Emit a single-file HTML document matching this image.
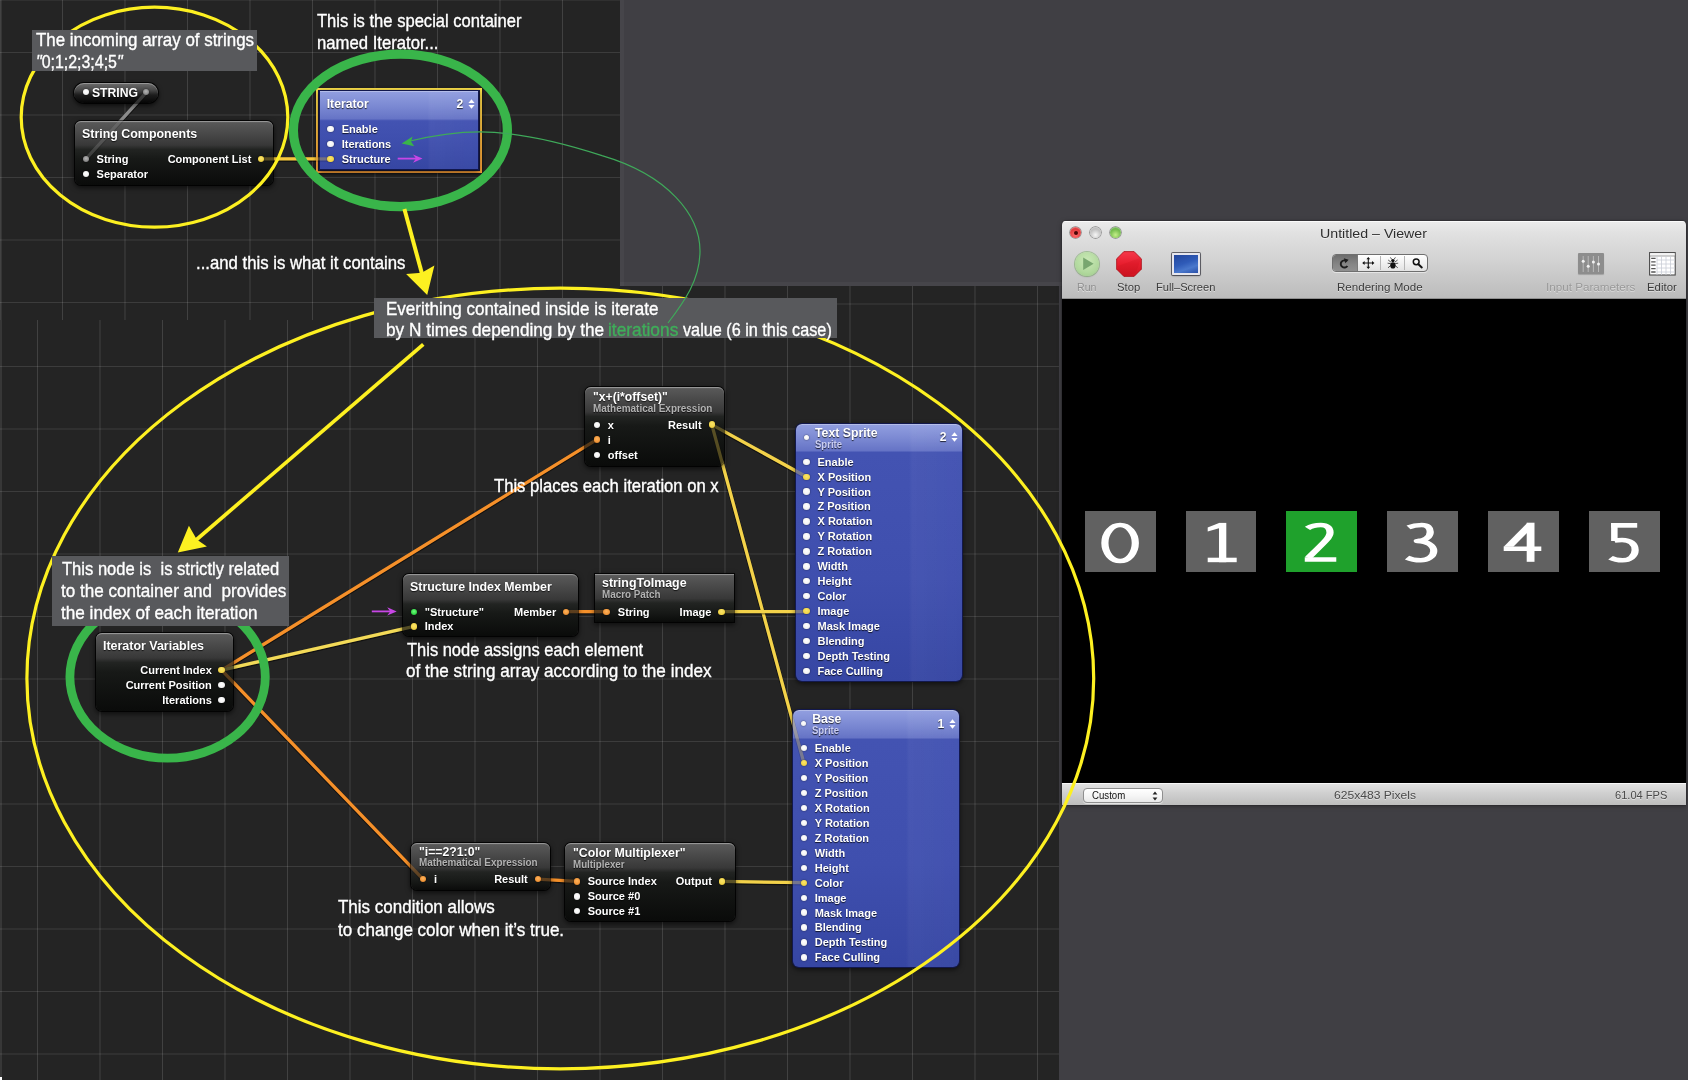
<!DOCTYPE html>
<html><head><meta charset="utf-8"><title>Iterator</title>
<style>
html,body{margin:0;padding:0;font-family:"Liberation Sans", sans-serif}
body{width:1688px;height:1080px;position:relative;overflow:hidden;background:#403f44;font-family:"Liberation Sans", sans-serif}
.grid{position:absolute;background-color:#242424;background-image:linear-gradient(to right,rgba(255,255,255,.135) 0,rgba(255,255,255,.135) 1px,transparent 1px),linear-gradient(to bottom,rgba(255,255,255,.11) 0,rgba(255,255,255,.11) 1px,transparent 1px);background-size:62.5px 62.5px}
</style></head><body>
<div style="position:absolute;left:0;top:0;width:1688px;height:1080px;will-change:transform">
<div class="grid" style="left:0;top:286px;width:1058.5px;height:794px;background-position:37px 17.5px;box-shadow:inset 2px 0 0 rgba(255,255,255,.09)"></div>
<div class="grid" style="left:0;top:0;width:620px;height:320px;background-position:-0.5px 52px;box-shadow:inset 2px 0 0 rgba(255,255,255,.08), inset 0 1px 0 rgba(255,255,255,.06)"></div>
<div style="position:absolute;left:0;top:1077px;width:2px;height:3px;background:#fff"></div>
<div style="position:absolute;left:620px;top:0;width:3.5px;height:286px;background:rgba(255,255,255,.035)"></div><div style="position:absolute;left:620px;top:282px;width:442px;height:4px;background:rgba(255,255,255,.035)"></div>
<svg style="position:absolute;left:0;top:0;opacity:1.0" width="1688" height="1080" viewBox="0 0 1688 1080"><line x1="146.4" y1="92.9" x2="85.9" y2="159.5" stroke="rgba(0,0,0,.45)" stroke-width="4.5" stroke-linecap="round"/><line x1="146.4" y1="92.3" x2="85.9" y2="158.9" stroke="#8c8c8c" stroke-width="3.3" stroke-linecap="round"/><line x1="260.7" y1="159.5" x2="330.6" y2="159.5" stroke="rgba(0,0,0,.45)" stroke-width="4.5" stroke-linecap="round"/><line x1="260.7" y1="158.9" x2="330.6" y2="158.9" stroke="#f6c83e" stroke-width="3.3" stroke-linecap="round"/><line x1="221.6" y1="670.7" x2="596.7" y2="440.2" stroke="rgba(0,0,0,.45)" stroke-width="4.5" stroke-linecap="round"/><line x1="221.6" y1="670.1" x2="596.7" y2="439.6" stroke="#f5902a" stroke-width="3.3" stroke-linecap="round"/><line x1="221.6" y1="670.7" x2="414.0" y2="627.0" stroke="rgba(0,0,0,.45)" stroke-width="4.5" stroke-linecap="round"/><line x1="221.6" y1="670.1" x2="414.0" y2="626.4" stroke="#f3da58" stroke-width="3.3" stroke-linecap="round"/><line x1="221.6" y1="670.7" x2="423.0" y2="879.7" stroke="rgba(0,0,0,.45)" stroke-width="4.5" stroke-linecap="round"/><line x1="221.6" y1="670.1" x2="423.0" y2="879.1" stroke="#f5902a" stroke-width="3.3" stroke-linecap="round"/><line x1="711.8" y1="425.2" x2="806.4" y2="477.3" stroke="rgba(0,0,0,.45)" stroke-width="4.5" stroke-linecap="round"/><line x1="711.8" y1="424.6" x2="806.4" y2="476.7" stroke="#f3d24a" stroke-width="3.3" stroke-linecap="round"/><line x1="711.8" y1="425.2" x2="803.9" y2="763.5" stroke="rgba(0,0,0,.45)" stroke-width="4.5" stroke-linecap="round"/><line x1="711.8" y1="424.6" x2="803.9" y2="762.9" stroke="#f3d24a" stroke-width="3.3" stroke-linecap="round"/><line x1="566.2" y1="612.3" x2="606.4" y2="612.3" stroke="rgba(0,0,0,.45)" stroke-width="4.5" stroke-linecap="round"/><line x1="566.2" y1="611.7" x2="606.4" y2="611.7" stroke="#f5902a" stroke-width="3.3" stroke-linecap="round"/><line x1="721.4" y1="612.3" x2="806.4" y2="612.3" stroke="rgba(0,0,0,.45)" stroke-width="4.5" stroke-linecap="round"/><line x1="721.4" y1="611.7" x2="806.4" y2="611.7" stroke="#f3d24a" stroke-width="3.3" stroke-linecap="round"/><line x1="537.7" y1="879.7" x2="576.8" y2="882.0" stroke="rgba(0,0,0,.45)" stroke-width="4.5" stroke-linecap="round"/><line x1="537.7" y1="879.1" x2="576.8" y2="881.4" stroke="#f5902a" stroke-width="3.3" stroke-linecap="round"/><line x1="722.2" y1="882.0" x2="803.9" y2="883.3" stroke="rgba(0,0,0,.45)" stroke-width="4.5" stroke-linecap="round"/><line x1="722.2" y1="881.4" x2="803.9" y2="882.7" stroke="#f3d24a" stroke-width="3.3" stroke-linecap="round"/></svg>
<div style="position:absolute;left:74px;top:83px;width:84px;height:19.5px;border-radius:10px;background:linear-gradient(to bottom,#6e6e6e 0,#484848 35%,#1c1c1c 60%,#050505 100%);box-shadow:0 0 0 1px rgba(0,0,0,.85),0 2px 4px 1px rgba(0,0,0,.6),inset 0 1px 0 rgba(255,255,255,.3)"></div>
<div style="position:absolute;left:74.7px;top:121.0px;width:197.9px;height:63.5px;border-radius:6px;background:linear-gradient(to bottom, #737373 0px, #585858 2px, #383838 24.0px, #222422 28.5px, #171917 38.0px, #0a0b0a 100%);box-shadow:0 0 0 1px rgba(0,0,0,.85),0 2px 5px 1px rgba(0,0,0,.6),inset 0 1px 0 rgba(255,255,255,.28)"></div>
<div style="position:absolute;left:316.3px;top:87.8px;width:165.5px;height:85px;background:linear-gradient(to bottom,#f7dc4a 0,#f5b93f 50%,#f39a35 100%);box-shadow:0 1px 3px rgba(0,0,0,.6)"></div>
<div style="position:absolute;left:318.3px;top:89.8px;width:161.5px;height:81px;background:#1a1a3a"></div>
<div style="position:absolute;left:319.6px;top:91.4px;width:158.8px;height:78.0px;border-radius:0px;background:linear-gradient(to right, rgba(255,255,255,0) 0, rgba(255,255,255,0) 68%, rgba(255,255,255,.035) 70%, rgba(255,255,255,.015) 100%),linear-gradient(to bottom, #929fe0 0px, #7a88d2 15.8px, #6674c6 27.8px, #4353b2 29.8px, #3f4fae 60%, #3646a3 100%);box-shadow:0 0 0 1px rgba(18,24,80,.95),0 2px 5px 1px rgba(0,0,0,.55),inset 0 1px 0 rgba(255,255,255,.30)"></div>
<svg style="position:absolute;left:467.7px;top:99.0px" width="7" height="10" viewBox="0 0 7 10"><path d="M3.5 0.3 L6.6 4 L0.4 4 Z M3.5 9.7 L6.6 6 L0.4 6 Z" fill="#fff"/></svg>
<div style="position:absolute;left:585.2px;top:387.4px;width:138.6px;height:78.2px;border-radius:6px;background:linear-gradient(to bottom, #737373 0px, #585858 2px, #383838 25.0px, #222422 29.5px, #171917 39.0px, #0a0b0a 100%);box-shadow:0 0 0 1px rgba(0,0,0,.85),0 2px 5px 1px rgba(0,0,0,.6),inset 0 1px 0 rgba(255,255,255,.28)"></div>
<div style="position:absolute;left:796.0px;top:424.0px;width:166.0px;height:257.3px;border-radius:6px;background:linear-gradient(to right, rgba(255,255,255,0) 0, rgba(255,255,255,0) 68%, rgba(255,255,255,.035) 70%, rgba(255,255,255,.015) 100%),linear-gradient(to bottom, #929fe0 0px, #7a88d2 15.1px, #6674c6 26.5px, #4353b2 28.5px, #3f4fae 60%, #3646a3 100%);box-shadow:0 0 0 1px rgba(18,24,80,.95),0 2px 5px 1px rgba(0,0,0,.55),inset 0 1px 0 rgba(255,255,255,.30)"></div>
<svg style="position:absolute;left:951.2px;top:432.4px" width="7" height="10" viewBox="0 0 7 10"><path d="M3.5 0.3 L6.6 4 L0.4 4 Z M3.5 9.7 L6.6 6 L0.4 6 Z" fill="#fff"/></svg>
<div style="position:absolute;left:793.3px;top:710.2px;width:166.0px;height:257.3px;border-radius:6px;background:linear-gradient(to right, rgba(255,255,255,0) 0, rgba(255,255,255,0) 68%, rgba(255,255,255,.035) 70%, rgba(255,255,255,.015) 100%),linear-gradient(to bottom, #929fe0 0px, #7a88d2 15.7px, #6674c6 27.5px, #4353b2 29.5px, #3f4fae 60%, #3646a3 100%);box-shadow:0 0 0 1px rgba(18,24,80,.95),0 2px 5px 1px rgba(0,0,0,.55),inset 0 1px 0 rgba(255,255,255,.30)"></div>
<svg style="position:absolute;left:948.5px;top:718.6px" width="7" height="10" viewBox="0 0 7 10"><path d="M3.5 0.3 L6.6 4 L0.4 4 Z M3.5 9.7 L6.6 6 L0.4 6 Z" fill="#fff"/></svg>
<div style="position:absolute;left:402.6px;top:574.2px;width:175.0px;height:61.6px;border-radius:6px;background:linear-gradient(to bottom, #737373 0px, #585858 2px, #383838 25.5px, #222422 30.0px, #171917 39.5px, #0a0b0a 100%);box-shadow:0 0 0 1px rgba(0,0,0,.85),0 2px 5px 1px rgba(0,0,0,.6),inset 0 1px 0 rgba(255,255,255,.28)"></div>
<div style="position:absolute;left:594.7px;top:573.8px;width:139.7px;height:48.3px;border-radius:0px;background:linear-gradient(to bottom, #6a6a6a 0px, #585858 2px, #383838 24.5px, #222422 29.0px, #171917 38.5px, #0a0b0a 100%);box-shadow:0 0 0 1px rgba(0,0,0,.85),0 2px 5px 1px rgba(0,0,0,.6),inset 0 1px 0 rgba(255,255,255,.28)"></div>
<div style="position:absolute;left:95.8px;top:632.7px;width:137.6px;height:78.7px;border-radius:6px;background:linear-gradient(to bottom, #737373 0px, #585858 2px, #383838 25.0px, #222422 29.5px, #171917 39.0px, #0a0b0a 100%);box-shadow:0 0 0 1px rgba(0,0,0,.85),0 2px 5px 1px rgba(0,0,0,.6),inset 0 1px 0 rgba(255,255,255,.28)"></div>
<div style="position:absolute;left:411.3px;top:842.6px;width:138.6px;height:47.9px;border-radius:6px;background:linear-gradient(to bottom, #737373 0px, #585858 2px, #383838 24.5px, #222422 29.0px, #171917 38.5px, #0a0b0a 100%);box-shadow:0 0 0 1px rgba(0,0,0,.85),0 2px 5px 1px rgba(0,0,0,.6),inset 0 1px 0 rgba(255,255,255,.28)"></div>
<div style="position:absolute;left:565.0px;top:843.0px;width:169.5px;height:78.2px;border-radius:6px;background:linear-gradient(to bottom, #737373 0px, #585858 2px, #383838 25.0px, #222422 29.5px, #171917 39.0px, #0a0b0a 100%);box-shadow:0 0 0 1px rgba(0,0,0,.85),0 2px 5px 1px rgba(0,0,0,.6),inset 0 1px 0 rgba(255,255,255,.28)"></div>
<svg style="position:absolute;left:0;top:0;opacity:0.3" width="1688" height="1080" viewBox="0 0 1688 1080"><line x1="146.4" y1="92.9" x2="85.9" y2="159.5" stroke="rgba(0,0,0,.45)" stroke-width="4.5" stroke-linecap="round"/><line x1="146.4" y1="92.3" x2="85.9" y2="158.9" stroke="#8c8c8c" stroke-width="3.3" stroke-linecap="round"/><line x1="260.7" y1="159.5" x2="330.6" y2="159.5" stroke="rgba(0,0,0,.45)" stroke-width="4.5" stroke-linecap="round"/><line x1="260.7" y1="158.9" x2="330.6" y2="158.9" stroke="#f6c83e" stroke-width="3.3" stroke-linecap="round"/><line x1="221.6" y1="670.7" x2="596.7" y2="440.2" stroke="rgba(0,0,0,.45)" stroke-width="4.5" stroke-linecap="round"/><line x1="221.6" y1="670.1" x2="596.7" y2="439.6" stroke="#f5902a" stroke-width="3.3" stroke-linecap="round"/><line x1="221.6" y1="670.7" x2="414.0" y2="627.0" stroke="rgba(0,0,0,.45)" stroke-width="4.5" stroke-linecap="round"/><line x1="221.6" y1="670.1" x2="414.0" y2="626.4" stroke="#f3da58" stroke-width="3.3" stroke-linecap="round"/><line x1="221.6" y1="670.7" x2="423.0" y2="879.7" stroke="rgba(0,0,0,.45)" stroke-width="4.5" stroke-linecap="round"/><line x1="221.6" y1="670.1" x2="423.0" y2="879.1" stroke="#f5902a" stroke-width="3.3" stroke-linecap="round"/><line x1="711.8" y1="425.2" x2="806.4" y2="477.3" stroke="rgba(0,0,0,.45)" stroke-width="4.5" stroke-linecap="round"/><line x1="711.8" y1="424.6" x2="806.4" y2="476.7" stroke="#f3d24a" stroke-width="3.3" stroke-linecap="round"/><line x1="711.8" y1="425.2" x2="803.9" y2="763.5" stroke="rgba(0,0,0,.45)" stroke-width="4.5" stroke-linecap="round"/><line x1="711.8" y1="424.6" x2="803.9" y2="762.9" stroke="#f3d24a" stroke-width="3.3" stroke-linecap="round"/><line x1="566.2" y1="612.3" x2="606.4" y2="612.3" stroke="rgba(0,0,0,.45)" stroke-width="4.5" stroke-linecap="round"/><line x1="566.2" y1="611.7" x2="606.4" y2="611.7" stroke="#f5902a" stroke-width="3.3" stroke-linecap="round"/><line x1="721.4" y1="612.3" x2="806.4" y2="612.3" stroke="rgba(0,0,0,.45)" stroke-width="4.5" stroke-linecap="round"/><line x1="721.4" y1="611.7" x2="806.4" y2="611.7" stroke="#f3d24a" stroke-width="3.3" stroke-linecap="round"/><line x1="537.7" y1="879.7" x2="576.8" y2="882.0" stroke="rgba(0,0,0,.45)" stroke-width="4.5" stroke-linecap="round"/><line x1="537.7" y1="879.1" x2="576.8" y2="881.4" stroke="#f5902a" stroke-width="3.3" stroke-linecap="round"/><line x1="722.2" y1="882.0" x2="803.9" y2="883.3" stroke="rgba(0,0,0,.45)" stroke-width="4.5" stroke-linecap="round"/><line x1="722.2" y1="881.4" x2="803.9" y2="882.7" stroke="#f3d24a" stroke-width="3.3" stroke-linecap="round"/></svg>
<div style="position:absolute;left:82.60px;top:89.10px;width:6.20px;height:6.20px;border-radius:50%;background:radial-gradient(circle at 50% 40%, #ffffff 0, #f4f4f4 55%, #c9c9c9 100%);box-shadow:0 0 1.5px rgba(0,0,0,.7)"></div>
<div style="position:absolute;left:143.30px;top:89.20px;width:6.20px;height:6.20px;border-radius:50%;background:radial-gradient(circle at 50% 40%, #b5b5b5 0, #8b8b8b 60%, #5c5c5c 100%);box-shadow:0 0 1.5px rgba(0,0,0,.7)"></div>
<div style="position:absolute;left:82.75px;top:155.75px;width:6.30px;height:6.30px;border-radius:50%;background:radial-gradient(circle at 50% 40%, #b5b5b5 0, #8b8b8b 60%, #5c5c5c 100%);box-shadow:0 0 1.5px rgba(0,0,0,.7)"></div>
<div style="position:absolute;left:82.75px;top:170.85px;width:6.30px;height:6.30px;border-radius:50%;background:radial-gradient(circle at 50% 40%, #ffffff 0, #f4f4f4 55%, #c9c9c9 100%);box-shadow:0 0 1.5px rgba(0,0,0,.7)"></div>
<div style="position:absolute;left:257.55px;top:155.75px;width:6.30px;height:6.30px;border-radius:50%;background:radial-gradient(circle at 50% 40%, #fbe56a 0, #f2d548 60%, #c9a92e 100%);box-shadow:0 0 1.5px rgba(0,0,0,.7)"></div>
<div style="position:absolute;left:327.45px;top:125.75px;width:6.30px;height:6.30px;border-radius:50%;background:radial-gradient(circle at 50% 40%, #ffffff 0, #f4f4f4 55%, #c9c9c9 100%);box-shadow:0 0 1.5px rgba(0,0,0,.7)"></div>
<div style="position:absolute;left:327.45px;top:140.75px;width:6.30px;height:6.30px;border-radius:50%;background:radial-gradient(circle at 50% 40%, #ffffff 0, #f4f4f4 55%, #c9c9c9 100%);box-shadow:0 0 1.5px rgba(0,0,0,.7)"></div>
<div style="position:absolute;left:327.45px;top:155.75px;width:6.30px;height:6.30px;border-radius:50%;background:radial-gradient(circle at 50% 40%, #fbe56a 0, #f2d548 60%, #c9a92e 100%);box-shadow:0 0 1.5px rgba(0,0,0,.7)"></div>
<div style="position:absolute;left:593.55px;top:422.05px;width:6.30px;height:6.30px;border-radius:50%;background:radial-gradient(circle at 50% 40%, #ffffff 0, #f4f4f4 55%, #c9c9c9 100%);box-shadow:0 0 1.5px rgba(0,0,0,.7)"></div>
<div style="position:absolute;left:593.55px;top:436.45px;width:6.30px;height:6.30px;border-radius:50%;background:radial-gradient(circle at 50% 40%, #ffb35a 0, #f0963a 60%, #c06f1e 100%);box-shadow:0 0 1.5px rgba(0,0,0,.7)"></div>
<div style="position:absolute;left:593.55px;top:452.05px;width:6.30px;height:6.30px;border-radius:50%;background:radial-gradient(circle at 50% 40%, #ffffff 0, #f4f4f4 55%, #c9c9c9 100%);box-shadow:0 0 1.5px rgba(0,0,0,.7)"></div>
<div style="position:absolute;left:708.65px;top:421.45px;width:6.30px;height:6.30px;border-radius:50%;background:radial-gradient(circle at 50% 40%, #fbe56a 0, #f2d548 60%, #c9a92e 100%);box-shadow:0 0 1.5px rgba(0,0,0,.7)"></div>
<div style="position:absolute;left:803.80px;top:434.60px;width:5.20px;height:5.20px;border-radius:50%;background:radial-gradient(circle at 50% 40%, #ffffff 0, #f4f4f4 55%, #c9c9c9 100%);box-shadow:0 0 1.5px rgba(0,0,0,.7)"></div>
<div style="position:absolute;left:803.25px;top:458.55px;width:6.30px;height:6.30px;border-radius:50%;background:radial-gradient(circle at 50% 40%, #ffffff 0, #f4f4f4 55%, #c9c9c9 100%);box-shadow:0 0 1.5px rgba(0,0,0,.7)"></div>
<div style="position:absolute;left:803.25px;top:473.50px;width:6.30px;height:6.30px;border-radius:50%;background:radial-gradient(circle at 50% 40%, #fbe56a 0, #f2d548 60%, #c9a92e 100%);box-shadow:0 0 1.5px rgba(0,0,0,.7)"></div>
<div style="position:absolute;left:803.25px;top:488.46px;width:6.30px;height:6.30px;border-radius:50%;background:radial-gradient(circle at 50% 40%, #ffffff 0, #f4f4f4 55%, #c9c9c9 100%);box-shadow:0 0 1.5px rgba(0,0,0,.7)"></div>
<div style="position:absolute;left:803.25px;top:503.42px;width:6.30px;height:6.30px;border-radius:50%;background:radial-gradient(circle at 50% 40%, #ffffff 0, #f4f4f4 55%, #c9c9c9 100%);box-shadow:0 0 1.5px rgba(0,0,0,.7)"></div>
<div style="position:absolute;left:803.25px;top:518.37px;width:6.30px;height:6.30px;border-radius:50%;background:radial-gradient(circle at 50% 40%, #ffffff 0, #f4f4f4 55%, #c9c9c9 100%);box-shadow:0 0 1.5px rgba(0,0,0,.7)"></div>
<div style="position:absolute;left:803.25px;top:533.33px;width:6.30px;height:6.30px;border-radius:50%;background:radial-gradient(circle at 50% 40%, #ffffff 0, #f4f4f4 55%, #c9c9c9 100%);box-shadow:0 0 1.5px rgba(0,0,0,.7)"></div>
<div style="position:absolute;left:803.25px;top:548.28px;width:6.30px;height:6.30px;border-radius:50%;background:radial-gradient(circle at 50% 40%, #ffffff 0, #f4f4f4 55%, #c9c9c9 100%);box-shadow:0 0 1.5px rgba(0,0,0,.7)"></div>
<div style="position:absolute;left:803.25px;top:563.24px;width:6.30px;height:6.30px;border-radius:50%;background:radial-gradient(circle at 50% 40%, #ffffff 0, #f4f4f4 55%, #c9c9c9 100%);box-shadow:0 0 1.5px rgba(0,0,0,.7)"></div>
<div style="position:absolute;left:803.25px;top:578.19px;width:6.30px;height:6.30px;border-radius:50%;background:radial-gradient(circle at 50% 40%, #ffffff 0, #f4f4f4 55%, #c9c9c9 100%);box-shadow:0 0 1.5px rgba(0,0,0,.7)"></div>
<div style="position:absolute;left:803.25px;top:593.14px;width:6.30px;height:6.30px;border-radius:50%;background:radial-gradient(circle at 50% 40%, #ffffff 0, #f4f4f4 55%, #c9c9c9 100%);box-shadow:0 0 1.5px rgba(0,0,0,.7)"></div>
<div style="position:absolute;left:803.25px;top:608.10px;width:6.30px;height:6.30px;border-radius:50%;background:radial-gradient(circle at 50% 40%, #fbe56a 0, #f2d548 60%, #c9a92e 100%);box-shadow:0 0 1.5px rgba(0,0,0,.7)"></div>
<div style="position:absolute;left:803.25px;top:623.05px;width:6.30px;height:6.30px;border-radius:50%;background:radial-gradient(circle at 50% 40%, #ffffff 0, #f4f4f4 55%, #c9c9c9 100%);box-shadow:0 0 1.5px rgba(0,0,0,.7)"></div>
<div style="position:absolute;left:803.25px;top:638.01px;width:6.30px;height:6.30px;border-radius:50%;background:radial-gradient(circle at 50% 40%, #ffffff 0, #f4f4f4 55%, #c9c9c9 100%);box-shadow:0 0 1.5px rgba(0,0,0,.7)"></div>
<div style="position:absolute;left:803.25px;top:652.97px;width:6.30px;height:6.30px;border-radius:50%;background:radial-gradient(circle at 50% 40%, #ffffff 0, #f4f4f4 55%, #c9c9c9 100%);box-shadow:0 0 1.5px rgba(0,0,0,.7)"></div>
<div style="position:absolute;left:803.25px;top:667.92px;width:6.30px;height:6.30px;border-radius:50%;background:radial-gradient(circle at 50% 40%, #ffffff 0, #f4f4f4 55%, #c9c9c9 100%);box-shadow:0 0 1.5px rgba(0,0,0,.7)"></div>
<div style="position:absolute;left:801.30px;top:720.80px;width:5.20px;height:5.20px;border-radius:50%;background:radial-gradient(circle at 50% 40%, #ffffff 0, #f4f4f4 55%, #c9c9c9 100%);box-shadow:0 0 1.5px rgba(0,0,0,.7)"></div>
<div style="position:absolute;left:800.75px;top:744.85px;width:6.30px;height:6.30px;border-radius:50%;background:radial-gradient(circle at 50% 40%, #ffffff 0, #f4f4f4 55%, #c9c9c9 100%);box-shadow:0 0 1.5px rgba(0,0,0,.7)"></div>
<div style="position:absolute;left:800.75px;top:759.82px;width:6.30px;height:6.30px;border-radius:50%;background:radial-gradient(circle at 50% 40%, #fbe56a 0, #f2d548 60%, #c9a92e 100%);box-shadow:0 0 1.5px rgba(0,0,0,.7)"></div>
<div style="position:absolute;left:800.75px;top:774.78px;width:6.30px;height:6.30px;border-radius:50%;background:radial-gradient(circle at 50% 40%, #ffffff 0, #f4f4f4 55%, #c9c9c9 100%);box-shadow:0 0 1.5px rgba(0,0,0,.7)"></div>
<div style="position:absolute;left:800.75px;top:789.75px;width:6.30px;height:6.30px;border-radius:50%;background:radial-gradient(circle at 50% 40%, #ffffff 0, #f4f4f4 55%, #c9c9c9 100%);box-shadow:0 0 1.5px rgba(0,0,0,.7)"></div>
<div style="position:absolute;left:800.75px;top:804.71px;width:6.30px;height:6.30px;border-radius:50%;background:radial-gradient(circle at 50% 40%, #ffffff 0, #f4f4f4 55%, #c9c9c9 100%);box-shadow:0 0 1.5px rgba(0,0,0,.7)"></div>
<div style="position:absolute;left:800.75px;top:819.68px;width:6.30px;height:6.30px;border-radius:50%;background:radial-gradient(circle at 50% 40%, #ffffff 0, #f4f4f4 55%, #c9c9c9 100%);box-shadow:0 0 1.5px rgba(0,0,0,.7)"></div>
<div style="position:absolute;left:800.75px;top:834.64px;width:6.30px;height:6.30px;border-radius:50%;background:radial-gradient(circle at 50% 40%, #ffffff 0, #f4f4f4 55%, #c9c9c9 100%);box-shadow:0 0 1.5px rgba(0,0,0,.7)"></div>
<div style="position:absolute;left:800.75px;top:849.61px;width:6.30px;height:6.30px;border-radius:50%;background:radial-gradient(circle at 50% 40%, #ffffff 0, #f4f4f4 55%, #c9c9c9 100%);box-shadow:0 0 1.5px rgba(0,0,0,.7)"></div>
<div style="position:absolute;left:800.75px;top:864.57px;width:6.30px;height:6.30px;border-radius:50%;background:radial-gradient(circle at 50% 40%, #ffffff 0, #f4f4f4 55%, #c9c9c9 100%);box-shadow:0 0 1.5px rgba(0,0,0,.7)"></div>
<div style="position:absolute;left:800.75px;top:879.53px;width:6.30px;height:6.30px;border-radius:50%;background:radial-gradient(circle at 50% 40%, #fbe56a 0, #f2d548 60%, #c9a92e 100%);box-shadow:0 0 1.5px rgba(0,0,0,.7)"></div>
<div style="position:absolute;left:800.75px;top:894.50px;width:6.30px;height:6.30px;border-radius:50%;background:radial-gradient(circle at 50% 40%, #ffffff 0, #f4f4f4 55%, #c9c9c9 100%);box-shadow:0 0 1.5px rgba(0,0,0,.7)"></div>
<div style="position:absolute;left:800.75px;top:909.47px;width:6.30px;height:6.30px;border-radius:50%;background:radial-gradient(circle at 50% 40%, #ffffff 0, #f4f4f4 55%, #c9c9c9 100%);box-shadow:0 0 1.5px rgba(0,0,0,.7)"></div>
<div style="position:absolute;left:800.75px;top:924.43px;width:6.30px;height:6.30px;border-radius:50%;background:radial-gradient(circle at 50% 40%, #ffffff 0, #f4f4f4 55%, #c9c9c9 100%);box-shadow:0 0 1.5px rgba(0,0,0,.7)"></div>
<div style="position:absolute;left:800.75px;top:939.39px;width:6.30px;height:6.30px;border-radius:50%;background:radial-gradient(circle at 50% 40%, #ffffff 0, #f4f4f4 55%, #c9c9c9 100%);box-shadow:0 0 1.5px rgba(0,0,0,.7)"></div>
<div style="position:absolute;left:800.75px;top:954.36px;width:6.30px;height:6.30px;border-radius:50%;background:radial-gradient(circle at 50% 40%, #ffffff 0, #f4f4f4 55%, #c9c9c9 100%);box-shadow:0 0 1.5px rgba(0,0,0,.7)"></div>
<div style="position:absolute;left:410.85px;top:608.55px;width:6.30px;height:6.30px;border-radius:50%;background:radial-gradient(circle at 50% 40%, #6dff7c 0, #35d848 60%, #1f9a2d 100%);box-shadow:0 0 1.5px rgba(0,0,0,.7)"></div>
<div style="position:absolute;left:410.85px;top:623.25px;width:6.30px;height:6.30px;border-radius:50%;background:radial-gradient(circle at 50% 40%, #fbe56a 0, #f2d548 60%, #c9a92e 100%);box-shadow:0 0 1.5px rgba(0,0,0,.7)"></div>
<div style="position:absolute;left:563.05px;top:608.55px;width:6.30px;height:6.30px;border-radius:50%;background:radial-gradient(circle at 50% 40%, #ffb35a 0, #f0963a 60%, #c06f1e 100%);box-shadow:0 0 1.5px rgba(0,0,0,.7)"></div>
<div style="position:absolute;left:603.25px;top:608.55px;width:6.30px;height:6.30px;border-radius:50%;background:radial-gradient(circle at 50% 40%, #ffb35a 0, #f0963a 60%, #c06f1e 100%);box-shadow:0 0 1.5px rgba(0,0,0,.7)"></div>
<div style="position:absolute;left:718.25px;top:608.55px;width:6.30px;height:6.30px;border-radius:50%;background:radial-gradient(circle at 50% 40%, #fbe56a 0, #f2d548 60%, #c9a92e 100%);box-shadow:0 0 1.5px rgba(0,0,0,.7)"></div>
<div style="position:absolute;left:218.45px;top:666.95px;width:6.30px;height:6.30px;border-radius:50%;background:radial-gradient(circle at 50% 40%, #fbe56a 0, #f2d548 60%, #c9a92e 100%);box-shadow:0 0 1.5px rgba(0,0,0,.7)"></div>
<div style="position:absolute;left:218.45px;top:682.05px;width:6.30px;height:6.30px;border-radius:50%;background:radial-gradient(circle at 50% 40%, #ffffff 0, #f4f4f4 55%, #c9c9c9 100%);box-shadow:0 0 1.5px rgba(0,0,0,.7)"></div>
<div style="position:absolute;left:218.45px;top:697.15px;width:6.30px;height:6.30px;border-radius:50%;background:radial-gradient(circle at 50% 40%, #ffffff 0, #f4f4f4 55%, #c9c9c9 100%);box-shadow:0 0 1.5px rgba(0,0,0,.7)"></div>
<div style="position:absolute;left:419.85px;top:875.95px;width:6.30px;height:6.30px;border-radius:50%;background:radial-gradient(circle at 50% 40%, #ffb35a 0, #f0963a 60%, #c06f1e 100%);box-shadow:0 0 1.5px rgba(0,0,0,.7)"></div>
<div style="position:absolute;left:534.55px;top:875.95px;width:6.30px;height:6.30px;border-radius:50%;background:radial-gradient(circle at 50% 40%, #ffb35a 0, #f0963a 60%, #c06f1e 100%);box-shadow:0 0 1.5px rgba(0,0,0,.7)"></div>
<div style="position:absolute;left:573.65px;top:878.25px;width:6.30px;height:6.30px;border-radius:50%;background:radial-gradient(circle at 50% 40%, #ffb35a 0, #f0963a 60%, #c06f1e 100%);box-shadow:0 0 1.5px rgba(0,0,0,.7)"></div>
<div style="position:absolute;left:573.65px;top:893.25px;width:6.30px;height:6.30px;border-radius:50%;background:radial-gradient(circle at 50% 40%, #ffffff 0, #f4f4f4 55%, #c9c9c9 100%);box-shadow:0 0 1.5px rgba(0,0,0,.7)"></div>
<div style="position:absolute;left:573.65px;top:908.15px;width:6.30px;height:6.30px;border-radius:50%;background:radial-gradient(circle at 50% 40%, #ffffff 0, #f4f4f4 55%, #c9c9c9 100%);box-shadow:0 0 1.5px rgba(0,0,0,.7)"></div>
<div style="position:absolute;left:719.05px;top:878.25px;width:6.30px;height:6.30px;border-radius:50%;background:radial-gradient(circle at 50% 40%, #fbe56a 0, #f2d548 60%, #c9a92e 100%);box-shadow:0 0 1.5px rgba(0,0,0,.7)"></div>
<span id="t17" style="position:absolute;left:91.80px;top:86.60px;font-size:12.00px;line-height:1;white-space:pre;font-weight:bold;color:#fff;transform-origin:0 0;transform:scaleX(1.0145);text-shadow:0 1px 1px rgba(0,0,0,.75);">STRING</span>
<span id="t18" style="position:absolute;left:81.50px;top:128.00px;font-size:12.20px;line-height:1;white-space:pre;font-weight:bold;color:#fff;transform-origin:0 0;transform:scaleX(1.0188);text-shadow:0 1px 1px rgba(0,0,0,.75);">String Components</span>
<span id="t19" style="position:absolute;left:96.60px;top:153.80px;font-size:11.00px;line-height:1;white-space:pre;font-weight:bold;color:#fff;transform-origin:0 0;text-shadow:0 1px 1px rgba(0,0,0,.75);">String</span>
<span id="t20" style="position:absolute;left:96.60px;top:168.80px;font-size:11.00px;line-height:1;white-space:pre;font-weight:bold;color:#fff;transform-origin:0 0;text-shadow:0 1px 1px rgba(0,0,0,.75);">Separator</span>
<span id="t21" style="position:absolute;left:167.68px;top:153.80px;font-size:11.00px;line-height:1;white-space:pre;font-weight:bold;color:#fff;transform-origin:0 0;text-shadow:0 1px 1px rgba(0,0,0,.75);">Component List</span>
<span id="t22" style="position:absolute;left:326.70px;top:97.90px;font-size:12.20px;line-height:1;white-space:pre;font-weight:bold;color:#fff;transform-origin:0 0;text-shadow:0 1px 1px rgba(0,0,0,.75);">Iterator</span>
<span id="t23" style="position:absolute;left:456.40px;top:98.20px;font-size:12.20px;line-height:1;white-space:pre;font-weight:bold;color:#fff;transform-origin:0 0;text-shadow:0 1px 1px rgba(0,0,0,.75);">2</span>
<span id="t24" style="position:absolute;left:341.70px;top:123.80px;font-size:11.00px;line-height:1;white-space:pre;font-weight:bold;color:#fff;transform-origin:0 0;text-shadow:0 1px 1px rgba(0,0,0,.75);">Enable</span>
<span id="t25" style="position:absolute;left:341.70px;top:138.80px;font-size:11.00px;line-height:1;white-space:pre;font-weight:bold;color:#fff;transform-origin:0 0;text-shadow:0 1px 1px rgba(0,0,0,.75);">Iterations</span>
<span id="t26" style="position:absolute;left:341.70px;top:153.80px;font-size:11.00px;line-height:1;white-space:pre;font-weight:bold;color:#fff;transform-origin:0 0;text-shadow:0 1px 1px rgba(0,0,0,.75);">Structure</span>
<span id="t27" style="position:absolute;left:593.20px;top:390.50px;font-size:12.20px;line-height:1;white-space:pre;font-weight:bold;color:#fff;transform-origin:0 0;transform:scaleX(0.9990);text-shadow:0 1px 1px rgba(0,0,0,.75);">"x+(i*offset)"</span>
<span id="t28" style="position:absolute;left:593.20px;top:403.50px;font-size:10.00px;line-height:1;white-space:pre;font-weight:bold;color:#b2b2b2;transform-origin:0 0;transform:scaleX(0.9938);text-shadow:0 1px 1px rgba(0,0,0,.75);">Mathematical Expression</span>
<span id="t29" style="position:absolute;left:607.80px;top:420.10px;font-size:11.00px;line-height:1;white-space:pre;font-weight:bold;color:#fff;transform-origin:0 0;text-shadow:0 1px 1px rgba(0,0,0,.75);">x</span>
<span id="t30" style="position:absolute;left:607.80px;top:434.50px;font-size:11.00px;line-height:1;white-space:pre;font-weight:bold;color:#fff;transform-origin:0 0;text-shadow:0 1px 1px rgba(0,0,0,.75);">i</span>
<span id="t31" style="position:absolute;left:607.80px;top:450.10px;font-size:11.00px;line-height:1;white-space:pre;font-weight:bold;color:#fff;transform-origin:0 0;text-shadow:0 1px 1px rgba(0,0,0,.75);">offset</span>
<span id="t32" style="position:absolute;left:667.98px;top:420.10px;font-size:11.00px;line-height:1;white-space:pre;font-weight:bold;color:#fff;transform-origin:0 0;text-shadow:0 1px 1px rgba(0,0,0,.75);">Result</span>
<span id="t33" style="position:absolute;left:815.40px;top:426.50px;font-size:12.20px;line-height:1;white-space:pre;font-weight:bold;color:#fff;transform-origin:0 0;transform:scaleX(1.0065);text-shadow:0 1px 1px rgba(0,0,0,.75);">Text Sprite</span>
<span id="t34" style="position:absolute;left:815.40px;top:439.60px;font-size:10.00px;line-height:1;white-space:pre;font-weight:bold;color:#c9cdf2;transform-origin:0 0;transform:scaleX(0.9526);text-shadow:0 1px 1px rgba(0,0,0,.75);">Sprite</span>
<span id="t35" style="position:absolute;left:939.70px;top:431.30px;font-size:12.20px;line-height:1;white-space:pre;font-weight:bold;color:#fff;transform-origin:0 0;text-shadow:0 1px 1px rgba(0,0,0,.75);">2</span>
<span id="t36" style="position:absolute;left:817.50px;top:456.60px;font-size:11.00px;line-height:1;white-space:pre;font-weight:bold;color:#fff;transform-origin:0 0;text-shadow:0 1px 1px rgba(0,0,0,.75);">Enable</span>
<span id="t37" style="position:absolute;left:817.50px;top:471.55px;font-size:11.00px;line-height:1;white-space:pre;font-weight:bold;color:#fff;transform-origin:0 0;text-shadow:0 1px 1px rgba(0,0,0,.75);">X Position</span>
<span id="t38" style="position:absolute;left:817.50px;top:486.51px;font-size:11.00px;line-height:1;white-space:pre;font-weight:bold;color:#fff;transform-origin:0 0;text-shadow:0 1px 1px rgba(0,0,0,.75);">Y Position</span>
<span id="t39" style="position:absolute;left:817.50px;top:501.46px;font-size:11.00px;line-height:1;white-space:pre;font-weight:bold;color:#fff;transform-origin:0 0;text-shadow:0 1px 1px rgba(0,0,0,.75);">Z Position</span>
<span id="t40" style="position:absolute;left:817.50px;top:516.42px;font-size:11.00px;line-height:1;white-space:pre;font-weight:bold;color:#fff;transform-origin:0 0;text-shadow:0 1px 1px rgba(0,0,0,.75);">X Rotation</span>
<span id="t41" style="position:absolute;left:817.50px;top:531.38px;font-size:11.00px;line-height:1;white-space:pre;font-weight:bold;color:#fff;transform-origin:0 0;text-shadow:0 1px 1px rgba(0,0,0,.75);">Y Rotation</span>
<span id="t42" style="position:absolute;left:817.50px;top:546.33px;font-size:11.00px;line-height:1;white-space:pre;font-weight:bold;color:#fff;transform-origin:0 0;text-shadow:0 1px 1px rgba(0,0,0,.75);">Z Rotation</span>
<span id="t43" style="position:absolute;left:817.50px;top:561.28px;font-size:11.00px;line-height:1;white-space:pre;font-weight:bold;color:#fff;transform-origin:0 0;text-shadow:0 1px 1px rgba(0,0,0,.75);">Width</span>
<span id="t44" style="position:absolute;left:817.50px;top:576.24px;font-size:11.00px;line-height:1;white-space:pre;font-weight:bold;color:#fff;transform-origin:0 0;text-shadow:0 1px 1px rgba(0,0,0,.75);">Height</span>
<span id="t45" style="position:absolute;left:817.50px;top:591.19px;font-size:11.00px;line-height:1;white-space:pre;font-weight:bold;color:#fff;transform-origin:0 0;text-shadow:0 1px 1px rgba(0,0,0,.75);">Color</span>
<span id="t46" style="position:absolute;left:817.50px;top:606.15px;font-size:11.00px;line-height:1;white-space:pre;font-weight:bold;color:#fff;transform-origin:0 0;text-shadow:0 1px 1px rgba(0,0,0,.75);">Image</span>
<span id="t47" style="position:absolute;left:817.50px;top:621.10px;font-size:11.00px;line-height:1;white-space:pre;font-weight:bold;color:#fff;transform-origin:0 0;text-shadow:0 1px 1px rgba(0,0,0,.75);">Mask Image</span>
<span id="t48" style="position:absolute;left:817.50px;top:636.06px;font-size:11.00px;line-height:1;white-space:pre;font-weight:bold;color:#fff;transform-origin:0 0;text-shadow:0 1px 1px rgba(0,0,0,.75);">Blending</span>
<span id="t49" style="position:absolute;left:817.50px;top:651.01px;font-size:11.00px;line-height:1;white-space:pre;font-weight:bold;color:#fff;transform-origin:0 0;text-shadow:0 1px 1px rgba(0,0,0,.75);">Depth Testing</span>
<span id="t50" style="position:absolute;left:817.50px;top:665.97px;font-size:11.00px;line-height:1;white-space:pre;font-weight:bold;color:#fff;transform-origin:0 0;text-shadow:0 1px 1px rgba(0,0,0,.75);">Face Culling</span>
<span id="t51" style="position:absolute;left:812.20px;top:712.70px;font-size:12.20px;line-height:1;white-space:pre;font-weight:bold;color:#fff;transform-origin:0 0;text-shadow:0 1px 1px rgba(0,0,0,.75);">Base</span>
<span id="t52" style="position:absolute;left:812.20px;top:725.90px;font-size:10.00px;line-height:1;white-space:pre;font-weight:bold;color:#c9cdf2;transform-origin:0 0;transform:scaleX(0.9526);text-shadow:0 1px 1px rgba(0,0,0,.75);">Sprite</span>
<span id="t53" style="position:absolute;left:937.60px;top:717.50px;font-size:12.20px;line-height:1;white-space:pre;font-weight:bold;color:#fff;transform-origin:0 0;text-shadow:0 1px 1px rgba(0,0,0,.75);">1</span>
<span id="t54" style="position:absolute;left:814.70px;top:742.90px;font-size:11.00px;line-height:1;white-space:pre;font-weight:bold;color:#fff;transform-origin:0 0;text-shadow:0 1px 1px rgba(0,0,0,.75);">Enable</span>
<span id="t55" style="position:absolute;left:814.70px;top:757.87px;font-size:11.00px;line-height:1;white-space:pre;font-weight:bold;color:#fff;transform-origin:0 0;text-shadow:0 1px 1px rgba(0,0,0,.75);">X Position</span>
<span id="t56" style="position:absolute;left:814.70px;top:772.83px;font-size:11.00px;line-height:1;white-space:pre;font-weight:bold;color:#fff;transform-origin:0 0;text-shadow:0 1px 1px rgba(0,0,0,.75);">Y Position</span>
<span id="t57" style="position:absolute;left:814.70px;top:787.79px;font-size:11.00px;line-height:1;white-space:pre;font-weight:bold;color:#fff;transform-origin:0 0;text-shadow:0 1px 1px rgba(0,0,0,.75);">Z Position</span>
<span id="t58" style="position:absolute;left:814.70px;top:802.76px;font-size:11.00px;line-height:1;white-space:pre;font-weight:bold;color:#fff;transform-origin:0 0;text-shadow:0 1px 1px rgba(0,0,0,.75);">X Rotation</span>
<span id="t59" style="position:absolute;left:814.70px;top:817.73px;font-size:11.00px;line-height:1;white-space:pre;font-weight:bold;color:#fff;transform-origin:0 0;text-shadow:0 1px 1px rgba(0,0,0,.75);">Y Rotation</span>
<span id="t60" style="position:absolute;left:814.70px;top:832.69px;font-size:11.00px;line-height:1;white-space:pre;font-weight:bold;color:#fff;transform-origin:0 0;text-shadow:0 1px 1px rgba(0,0,0,.75);">Z Rotation</span>
<span id="t61" style="position:absolute;left:814.70px;top:847.65px;font-size:11.00px;line-height:1;white-space:pre;font-weight:bold;color:#fff;transform-origin:0 0;text-shadow:0 1px 1px rgba(0,0,0,.75);">Width</span>
<span id="t62" style="position:absolute;left:814.70px;top:862.62px;font-size:11.00px;line-height:1;white-space:pre;font-weight:bold;color:#fff;transform-origin:0 0;text-shadow:0 1px 1px rgba(0,0,0,.75);">Height</span>
<span id="t63" style="position:absolute;left:814.70px;top:877.58px;font-size:11.00px;line-height:1;white-space:pre;font-weight:bold;color:#fff;transform-origin:0 0;text-shadow:0 1px 1px rgba(0,0,0,.75);">Color</span>
<span id="t64" style="position:absolute;left:814.70px;top:892.55px;font-size:11.00px;line-height:1;white-space:pre;font-weight:bold;color:#fff;transform-origin:0 0;text-shadow:0 1px 1px rgba(0,0,0,.75);">Image</span>
<span id="t65" style="position:absolute;left:814.70px;top:907.51px;font-size:11.00px;line-height:1;white-space:pre;font-weight:bold;color:#fff;transform-origin:0 0;text-shadow:0 1px 1px rgba(0,0,0,.75);">Mask Image</span>
<span id="t66" style="position:absolute;left:814.70px;top:922.48px;font-size:11.00px;line-height:1;white-space:pre;font-weight:bold;color:#fff;transform-origin:0 0;text-shadow:0 1px 1px rgba(0,0,0,.75);">Blending</span>
<span id="t67" style="position:absolute;left:814.70px;top:937.44px;font-size:11.00px;line-height:1;white-space:pre;font-weight:bold;color:#fff;transform-origin:0 0;text-shadow:0 1px 1px rgba(0,0,0,.75);">Depth Testing</span>
<span id="t68" style="position:absolute;left:814.70px;top:952.41px;font-size:11.00px;line-height:1;white-space:pre;font-weight:bold;color:#fff;transform-origin:0 0;text-shadow:0 1px 1px rgba(0,0,0,.75);">Face Culling</span>
<span id="t69" style="position:absolute;left:409.80px;top:580.90px;font-size:12.20px;line-height:1;white-space:pre;font-weight:bold;color:#fff;transform-origin:0 0;transform:scaleX(1.0157);text-shadow:0 1px 1px rgba(0,0,0,.75);">Structure Index Member</span>
<span id="t70" style="position:absolute;left:424.70px;top:606.60px;font-size:11.00px;line-height:1;white-space:pre;font-weight:bold;color:#fff;transform-origin:0 0;text-shadow:0 1px 1px rgba(0,0,0,.75);">"Structure"</span>
<span id="t71" style="position:absolute;left:424.70px;top:621.30px;font-size:11.00px;line-height:1;white-space:pre;font-weight:bold;color:#fff;transform-origin:0 0;text-shadow:0 1px 1px rgba(0,0,0,.75);">Index</span>
<span id="t72" style="position:absolute;left:514.01px;top:606.60px;font-size:11.00px;line-height:1;white-space:pre;font-weight:bold;color:#fff;transform-origin:0 0;text-shadow:0 1px 1px rgba(0,0,0,.75);">Member</span>
<span id="t73" style="position:absolute;left:602.40px;top:576.60px;font-size:12.20px;line-height:1;white-space:pre;font-weight:bold;color:#fff;transform-origin:0 0;transform:scaleX(1.0185);text-shadow:0 1px 1px rgba(0,0,0,.75);">stringToImage</span>
<span id="t74" style="position:absolute;left:602.40px;top:590.00px;font-size:10.00px;line-height:1;white-space:pre;font-weight:bold;color:#b2b2b2;transform-origin:0 0;transform:scaleX(0.9837);text-shadow:0 1px 1px rgba(0,0,0,.75);">Macro Patch</span>
<span id="t75" style="position:absolute;left:617.80px;top:606.60px;font-size:11.00px;line-height:1;white-space:pre;font-weight:bold;color:#fff;transform-origin:0 0;text-shadow:0 1px 1px rgba(0,0,0,.75);">String</span>
<span id="t76" style="position:absolute;left:679.60px;top:606.60px;font-size:11.00px;line-height:1;white-space:pre;font-weight:bold;color:#fff;transform-origin:0 0;text-shadow:0 1px 1px rgba(0,0,0,.75);">Image</span>
<span id="t77" style="position:absolute;left:102.50px;top:639.80px;font-size:12.20px;line-height:1;white-space:pre;font-weight:bold;color:#fff;transform-origin:0 0;transform:scaleX(1.0212);text-shadow:0 1px 1px rgba(0,0,0,.75);">Iterator Variables</span>
<span id="t78" style="position:absolute;left:140.28px;top:665.00px;font-size:11.00px;line-height:1;white-space:pre;font-weight:bold;color:#fff;transform-origin:0 0;text-shadow:0 1px 1px rgba(0,0,0,.75);">Current Index</span>
<span id="t79" style="position:absolute;left:125.63px;top:680.10px;font-size:11.00px;line-height:1;white-space:pre;font-weight:bold;color:#fff;transform-origin:0 0;text-shadow:0 1px 1px rgba(0,0,0,.75);">Current Position</span>
<span id="t80" style="position:absolute;left:162.28px;top:695.20px;font-size:11.00px;line-height:1;white-space:pre;font-weight:bold;color:#fff;transform-origin:0 0;text-shadow:0 1px 1px rgba(0,0,0,.75);">Iterations</span>
<span id="t81" style="position:absolute;left:419.00px;top:846.00px;font-size:12.20px;line-height:1;white-space:pre;font-weight:bold;color:#fff;transform-origin:0 0;transform:scaleX(1.0047);text-shadow:0 1px 1px rgba(0,0,0,.75);">"i==2?1:0"</span>
<span id="t82" style="position:absolute;left:419.00px;top:858.20px;font-size:10.00px;line-height:1;white-space:pre;font-weight:bold;color:#b2b2b2;transform-origin:0 0;transform:scaleX(0.9879);text-shadow:0 1px 1px rgba(0,0,0,.75);">Mathematical Expression</span>
<span id="t83" style="position:absolute;left:433.90px;top:874.00px;font-size:11.00px;line-height:1;white-space:pre;font-weight:bold;color:#fff;transform-origin:0 0;text-shadow:0 1px 1px rgba(0,0,0,.75);">i</span>
<span id="t84" style="position:absolute;left:494.17px;top:874.00px;font-size:11.00px;line-height:1;white-space:pre;font-weight:bold;color:#fff;transform-origin:0 0;text-shadow:0 1px 1px rgba(0,0,0,.75);">Result</span>
<span id="t85" style="position:absolute;left:572.90px;top:847.00px;font-size:12.20px;line-height:1;white-space:pre;font-weight:bold;color:#fff;transform-origin:0 0;transform:scaleX(1.0134);text-shadow:0 1px 1px rgba(0,0,0,.75);">"Color Multiplexer"</span>
<span id="t86" style="position:absolute;left:572.90px;top:859.90px;font-size:10.00px;line-height:1;white-space:pre;font-weight:bold;color:#b2b2b2;transform-origin:0 0;transform:scaleX(0.9773);text-shadow:0 1px 1px rgba(0,0,0,.75);">Multiplexer</span>
<span id="t87" style="position:absolute;left:587.70px;top:876.30px;font-size:11.00px;line-height:1;white-space:pre;font-weight:bold;color:#fff;transform-origin:0 0;text-shadow:0 1px 1px rgba(0,0,0,.75);">Source Index</span>
<span id="t88" style="position:absolute;left:587.70px;top:891.30px;font-size:11.00px;line-height:1;white-space:pre;font-weight:bold;color:#fff;transform-origin:0 0;text-shadow:0 1px 1px rgba(0,0,0,.75);">Source #0</span>
<span id="t89" style="position:absolute;left:587.70px;top:906.20px;font-size:11.00px;line-height:1;white-space:pre;font-weight:bold;color:#fff;transform-origin:0 0;text-shadow:0 1px 1px rgba(0,0,0,.75);">Source #1</span>
<span id="t90" style="position:absolute;left:675.75px;top:876.30px;font-size:11.00px;line-height:1;white-space:pre;font-weight:bold;color:#fff;transform-origin:0 0;text-shadow:0 1px 1px rgba(0,0,0,.75);">Output</span>
<div style="position:absolute;left:1062px;top:221px;width:624px;height:584.1px;background:#000;border-radius:4px 4px 0 0;box-shadow:0 1px 5px rgba(0,0,0,.35),0 0 1.5px rgba(0,0,0,.6);overflow:hidden"><div style="position:absolute;left:0;top:0;width:100%;height:77.6px;background:linear-gradient(to bottom,#ececec 0,#e1e1e1 12px,#d2d2d2 40px,#bcbcbc 76.6px,#8a8a8a 77.6px);box-shadow:inset 0 1px 0 rgba(255,255,255,.8)"></div><div style="position:absolute;left:0;top:561.6px;width:100%;height:22.5px;background:linear-gradient(to bottom,#e4e4e4 0,#d0d0d0 45%,#bdbdbd 100%);box-shadow:inset 0 1px 0 rgba(255,255,255,.7)"></div></div><div style="position:absolute;left:1070.4px;top:227.4px;width:11px;height:11px;border-radius:50%;background:radial-gradient(circle at 50% 72%, #ff7070 0, #d62426 85%);box-shadow:0 0 0 0.7px rgba(0,0,0,.42),inset 0 1px 1px rgba(255,255,255,.35)"></div><div style="position:absolute;left:1073.7px;top:230.7px;width:4.4px;height:4.4px;border-radius:50%;background:#4a0606"></div><div style="position:absolute;left:1090.3px;top:227.4px;width:11px;height:11px;border-radius:50%;background:radial-gradient(circle at 50% 72%, #f6f6f6 0, #a9a9a9 85%);box-shadow:0 0 0 0.7px rgba(0,0,0,.42),inset 0 1px 1px rgba(255,255,255,.35)"></div><div style="position:absolute;left:1110.4px;top:227.4px;width:11px;height:11px;border-radius:50%;background:radial-gradient(circle at 50% 72%, #c4ee88 0, #4fa432 85%);box-shadow:0 0 0 0.7px rgba(0,0,0,.42),inset 0 1px 1px rgba(255,255,255,.35)"></div><div style="position:absolute;left:1074.7px;top:251.8px;width:24px;height:24px;border-radius:50%;background:radial-gradient(circle at 50% 35%,#c9e8b6 0,#b2d99e 60%,#9ccb88 100%);box-shadow:0 0 0 1px rgba(120,170,100,.55),0 1px 2px rgba(0,0,0,.15)"></div><svg style="position:absolute;left:1074.2px;top:251.2px" width="25" height="25" viewBox="0 0 25 25"><path d="M9.2 6.5 L19.6 12.7 L9.2 18.9 Z" fill="#78a66f"/></svg><svg style="position:absolute;left:1116px;top:250.8px" width="26" height="26" viewBox="0 0 26 26"><defs><linearGradient id="stg" x1="0" y1="0" x2="0" y2="1"><stop offset="0" stop-color="#f5384a"/><stop offset=".5" stop-color="#e81e2e"/><stop offset="1" stop-color="#d01522"/></linearGradient></defs><polygon points="25.38,18.13 18.13,25.38 7.87,25.38 0.62,18.13 0.62,7.87 7.87,0.62 18.13,0.62 25.38,7.87" fill="url(#stg)" stroke="#a81018" stroke-width=".8"/><path d="M2 15 L24 7 L24 10 L20 22 L8 25 L2 19 Z" fill="rgba(160,0,10,.10)"/></svg><div style="position:absolute;left:1171.8px;top:252.8px;width:28.3px;height:22.2px;box-sizing:border-box;border:2px solid #e6e6ee;border-radius:1px;background:linear-gradient(160deg,#23469c 0,#2f5bb8 45%,#4a78cc 70%,#2a50a8 100%);box-shadow:0 0 0 1px rgba(60,60,70,.75),0 1px 2px rgba(0,0,0,.4)"></div><div style="position:absolute;left:1332.2px;top:254.3px;width:96.2px;height:17.4px;box-sizing:border-box;border:1px solid #6f6f6f;border-radius:4px;background:linear-gradient(to bottom,#ffffff 0,#f1f1f1 50%,#e2e2e2 100%);box-shadow:0 1px 0 rgba(255,255,255,.5);overflow:hidden"><div style="position:absolute;left:0;top:0;width:23.5px;height:100%;background:linear-gradient(to bottom,#6d6d6d 0,#868686 60%,#8f8f8f 100%)"></div><div style="position:absolute;left:23.5px;top:0;width:1px;height:100%;background:#7a7a7a"></div><div style="position:absolute;left:47.3px;top:1px;width:1px;height:90%;background:#b5b5b5"></div><div style="position:absolute;left:71.1px;top:1px;width:1px;height:90%;background:#b5b5b5"></div></div><svg style="position:absolute;left:1332px;top:254px" width="97" height="18" viewBox="0 0 97 18" fill="none"><path d="M14.9 7.4 A3.6 3.6 0 1 0 15.4 11.9" stroke="#1c1c1c" stroke-width="1.9"/><path d="M11.9 4.2 L16.6 5.8 L13.3 9.2 Z" fill="#1c1c1c"/><path d="M36.3 4.6 V13.4 M31.9 9 H40.7" stroke="#111" stroke-width="1.1"/><path d="M36.3 2.9 L38.2 5.3 H34.4 Z M36.3 15.1 L38.2 12.7 H34.4 Z M30.2 9 L32.6 7.1 V10.9 Z M42.4 9 L40 7.1 V10.9 Z" fill="#111"/><ellipse cx="60.9" cy="11.4" rx="2.7" ry="3.1" fill="#111"/><circle cx="60.9" cy="6.6" r="1.7" fill="#111"/><path d="M59 8.2 L56.2 6 M62.8 8.2 L65.6 6 M58.6 9.6 L55.6 9.2 M63.2 9.6 L66.2 9.2 M58.6 11.6 L56 13.8 M63.2 11.6 L65.8 13.8 M59.8 5.4 L58.4 3.4 M62 5.4 L63.4 3.4" stroke="#111" stroke-width=".7"/><circle cx="84.2" cy="7.8" r="2.9" stroke="#111" stroke-width="1.5"/><path d="M86.4 10.2 L89.8 13.4" stroke="#111" stroke-width="2" stroke-linecap="round"/></svg><div style="position:absolute;left:1578.1px;top:252.5px;width:25.5px;height:21.9px;background:#8d8d8d;border-radius:1px;box-shadow:0 1px 1px rgba(0,0,0,.2)"></div><svg style="position:absolute;left:1578.1px;top:252.5px" width="26" height="22" viewBox="0 0 26 22" fill="none"><path d="M5.2 3 V19 M10.2 3 V19 M15.4 3 V19 M20.5 3 V19" stroke="#b9b9b9" stroke-width="1"/><circle cx="5.2" cy="8.2" r="1.5" fill="#f2f2f2"/><circle cx="10.2" cy="13.3" r="1.5" fill="#f2f2f2"/><circle cx="15.4" cy="9" r="1.5" fill="#f2f2f2"/><circle cx="20.5" cy="11" r="1.5" fill="#f2f2f2"/></svg><svg style="position:absolute;left:1648.5px;top:252.3px" width="27" height="24" viewBox="0 0 27 24" fill="none"><rect x=".6" y=".6" width="25.6" height="22.4" fill="#fff" stroke="#4a4a4a" stroke-width="1.1"/><rect x="1.2" y="1.2" width="24.4" height="2.6" fill="#f4f4f4"/><path d="M1 4 H26" stroke="#8a8a8a" stroke-width=".8"/><path d="M8 4 V23 M12.5 4 V23 M17 4 V23 M21.5 4 V23 M8 8 H26 M8 12 H26 M8 16 H26 M8 20 H26" stroke="#c9cdd6" stroke-width=".8"/><path d="M2.2 6.4 H6.6 M2.2 9.8 H6.6 M2.2 13.2 H6.6 M2.2 16.6 H6.6 M2.2 20 H6.6" stroke="#555" stroke-width="1.3"/></svg><div style="position:absolute;left:1085.0px;top:511.2px;width:71.0px;height:60.5px;background:#616161"></div><div style="position:absolute;left:1186.0px;top:511.2px;width:70.0px;height:60.5px;background:#616161"></div><div style="position:absolute;left:1286.0px;top:511.2px;width:71.0px;height:60.5px;background:#1fa12c"></div><div style="position:absolute;left:1386.9px;top:511.2px;width:71.0px;height:60.5px;background:#616161"></div><div style="position:absolute;left:1488.1px;top:511.2px;width:71.0px;height:60.5px;background:#616161"></div><div style="position:absolute;left:1589.2px;top:511.2px;width:71.0px;height:60.5px;background:#616161"></div><svg style="position:absolute;left:0;top:0" width="1688" height="1080" viewBox="0 0 1688 1080" fill="none" stroke="#fff" stroke-width="4.5" stroke-linejoin="round"><g transform="translate(1120.1,522.7) scale(1.6,1)"><ellipse cx="0" cy="20.4" rx="9.5" ry="18"/></g><g fill="#fff" stroke="none"><rect x="1219" y="522.9" width="7.3" height="39.3"/><rect x="1207.7" y="557.7" width="29" height="4.5"/><path d="M1219 522.9 L1207.7 527.4 L1207.7 531.5 L1219 528.2 Z"/></g><g transform="translate(1321.4,522.7) scale(1.6,1)"><path d="M -8.7,5.7 C -6.5,3.4 -3.5,2.25 -0.4,2.25 C 3.6,2.25 5.4,5.2 5.4,9.7 C 5.4,14.5 2.5,18.5 -8.3,35.2"/><path d="M -10.4,36.9 H 9.3"/></g><g transform="translate(1422.4,522.7) scale(1.6,1)"><path d="M -8.7,4.7 C -6,2.9 -3,2.25 -0.4,2.25 C 3.2,2.25 4.9,5 4.9,9.2 C 4.9,14 2,17.5 -3.2,18.4 C 3.5,19 7.1,23 7.1,28.4 C 7.1,34 3,37.55 -1,37.55 C -4.5,37.55 -7.5,36.5 -9.6,34.9"/></g><g fill="#fff" stroke="none"><rect x="1526.7" y="522.7" width="7.8" height="39.1"/><rect x="1503.7" y="546.5" width="37.6" height="4.5"/><path d="M1527.5 522.7 L1503.7 546.8 L1513.3 546.8 L1527.5 532.4 Z"/></g><g fill="#fff" stroke="none"><rect x="1611.1" y="523" width="26.1" height="4.7"/><rect x="1611.1" y="523" width="6.5" height="18"/></g><g transform="translate(1624.6,523.0) scale(1.6,1)"><path d="M -6.4,17.5 C -5,17.1 -3.5,16.9 -1.6,16.9 C 3.5,16.9 6.6,21 6.6,27.1 C 6.6,33.5 3,37.35 -1.25,37.35 C -4.5,37.35 -7,36.3 -8.8,34.8"/></g></svg><div style="position:absolute;left:1082.6px;top:788.4px;width:80.6px;height:14.2px;box-sizing:border-box;border:1px solid #8f8f8f;border-radius:4px;background:linear-gradient(to bottom,#ffffff 0,#f6f6f6 50%,#e9e9e9 100%);box-shadow:0 1px 0 rgba(255,255,255,.6)"></div><svg style="position:absolute;left:1151.5px;top:790.5px" width="6" height="10" viewBox="0 0 6 10"><path d="M3 .6 L5.4 3.6 H.6 Z M3 9.4 L5.4 6.4 H.6 Z" fill="#222"/></svg>
<span id="t91" style="position:absolute;left:1320.20px;top:226.90px;font-size:13.00px;line-height:1;white-space:pre;font-weight:normal;color:#2e2e2e;transform-origin:0 0;transform:scaleX(1.0913);text-shadow:0 1px 0 rgba(255,255,255,.6);">Untitled – Viewer</span>
<span id="t92" style="position:absolute;left:1076.60px;top:281.50px;font-size:11.00px;line-height:1;white-space:pre;font-weight:normal;color:#8e8e8e;transform-origin:0 0;transform:scaleX(0.9610);text-shadow:0 1px 0 rgba(255,255,255,.5);">Run</span>
<span id="t93" style="position:absolute;left:1117.20px;top:281.50px;font-size:11.00px;line-height:1;white-space:pre;font-weight:normal;color:#3b3b3b;transform-origin:0 0;transform:scaleX(1.0247);text-shadow:0 1px 0 rgba(255,255,255,.5);">Stop</span>
<span id="t94" style="position:absolute;left:1155.70px;top:281.50px;font-size:11.00px;line-height:1;white-space:pre;font-weight:normal;color:#3b3b3b;transform-origin:0 0;transform:scaleX(1.0119);text-shadow:0 1px 0 rgba(255,255,255,.5);">Full–Screen</span>
<span id="t95" style="position:absolute;left:1337.40px;top:281.50px;font-size:11.00px;line-height:1;white-space:pre;font-weight:normal;color:#3b3b3b;transform-origin:0 0;transform:scaleX(1.0523);text-shadow:0 1px 0 rgba(255,255,255,.5);">Rendering Mode</span>
<span id="t96" style="position:absolute;left:1545.70px;top:281.60px;font-size:11.00px;line-height:1;white-space:pre;font-weight:normal;color:#9a9a9a;transform-origin:0 0;transform:scaleX(1.0596);text-shadow:0 1px 0 rgba(255,255,255,.4);">Input Parameters</span>
<span id="t97" style="position:absolute;left:1647.00px;top:281.60px;font-size:11.00px;line-height:1;white-space:pre;font-weight:normal;color:#3b3b3b;transform-origin:0 0;transform:scaleX(1.0365);text-shadow:0 1px 0 rgba(255,255,255,.5);">Editor</span>
<span id="t98" style="position:absolute;left:1092.10px;top:790.80px;font-size:10.00px;line-height:1;white-space:pre;font-weight:normal;color:#111;transform-origin:0 0;transform:scaleX(0.9636);">Custom</span>
<span id="t99" style="position:absolute;left:1334.00px;top:789.70px;font-size:11.00px;line-height:1;white-space:pre;font-weight:normal;color:#4a4a4a;transform-origin:0 0;transform:scaleX(1.0991);text-shadow:0 1px 0 rgba(255,255,255,.5);">625x483 Pixels</span>
<span id="t100" style="position:absolute;left:1615.40px;top:789.70px;font-size:11.00px;line-height:1;white-space:pre;font-weight:normal;color:#4a4a4a;transform-origin:0 0;transform:scaleX(1.0080);text-shadow:0 1px 0 rgba(255,255,255,.5);">61.04 FPS</span>
<svg style="position:absolute;left:0;top:0" width="1688" height="1080" viewBox="0 0 1688 1080" fill="none"><ellipse cx="154.5" cy="117.2" rx="133.3" ry="110" stroke="#fdf021" stroke-width="3.2"/><ellipse cx="560.3" cy="678.5" rx="533.4" ry="390.3" stroke="#fdf021" stroke-width="3.2"/><ellipse cx="400.4" cy="130.4" rx="107" ry="76.2" stroke="#39b54a" stroke-width="9.2"/><ellipse cx="167.6" cy="677" rx="97.7" ry="81.2" stroke="#39b54a" stroke-width="8.8"/><line x1="404.4" y1="209" x2="422.6" y2="276" stroke="#fdf021" stroke-width="4"/><path d="M427.2 295 L406.1 273.9 L421.7 272.8 L434.4 265.6 Z" fill="#fdf021"/><line x1="423.3" y1="344.4" x2="195.5" y2="540.5" stroke="#fdf021" stroke-width="3.7"/><path d="M177.8 552.6 L188.9 525.8 L196.8 539.6 L206.9 546.6 Z" fill="#fdf021"/></svg>
<div style="position:absolute;left:32.2px;top:30.0px;width:224.8px;height:41.0px;background:#58595c"></div><div style="position:absolute;left:374.0px;top:297.9px;width:463.0px;height:40.6px;background:#58595c"></div><div style="position:absolute;left:52.4px;top:556.2px;width:236.7px;height:69.6px;background:#58595c"></div>
<span id="t0" style="position:absolute;left:36.00px;top:32.00px;font-size:17.80px;line-height:1;white-space:pre;font-weight:normal;color:#fff;transform-origin:0 0;transform:scaleX(0.9508);-webkit-text-stroke-width:0.35px;">The incoming array of strings</span>
<span id="t1" style="position:absolute;left:35.60px;top:53.70px;font-size:17.80px;line-height:1;white-space:pre;font-weight:normal;color:#fff;transform-origin:0 0;transform:scaleX(0.8958);-webkit-text-stroke-width:0.35px;"><i>"</i>0;1;2;3;4;5<i>"</i></span>
<span id="t2" style="position:absolute;left:317.30px;top:12.70px;font-size:17.80px;line-height:1;white-space:pre;font-weight:normal;color:#fff;transform-origin:0 0;transform:scaleX(0.9320);-webkit-text-stroke-width:0.35px;">This is the special container</span>
<span id="t3" style="position:absolute;left:317.20px;top:34.50px;font-size:17.80px;line-height:1;white-space:pre;font-weight:normal;color:#fff;transform-origin:0 0;transform:scaleX(0.9383);-webkit-text-stroke-width:0.35px;">named Iterator...</span>
<span id="t4" style="position:absolute;left:195.70px;top:254.60px;font-size:17.80px;line-height:1;white-space:pre;font-weight:normal;color:#fff;transform-origin:0 0;transform:scaleX(0.9416);-webkit-text-stroke-width:0.35px;">...and this is what it contains</span>
<span id="t5" style="position:absolute;left:386.00px;top:300.60px;font-size:17.80px;line-height:1;white-space:pre;font-weight:normal;color:#fff;transform-origin:0 0;transform:scaleX(0.9572);-webkit-text-stroke-width:0.35px;">Everithing contained inside is iterate</span>
<span id="t6" style="position:absolute;left:386.00px;top:322.00px;font-size:17.80px;line-height:1;white-space:pre;font-weight:normal;color:#fff;transform-origin:0 0;transform:scaleX(0.9677);-webkit-text-stroke-width:0.35px;">by N times depending by the</span>
<span id="t7" style="position:absolute;left:608.10px;top:322.00px;font-size:17.80px;line-height:1;white-space:pre;font-weight:normal;color:#3fae5a;transform-origin:0 0;transform:scaleX(0.9743);-webkit-text-stroke-width:0.35px;">iterations</span>
<span id="t8" style="position:absolute;left:682.60px;top:322.00px;font-size:17.80px;line-height:1;white-space:pre;font-weight:normal;color:#fff;transform-origin:0 0;transform:scaleX(0.9124);-webkit-text-stroke-width:0.35px;">value (6 in this case)</span>
<span id="t9" style="position:absolute;left:493.50px;top:477.70px;font-size:17.80px;line-height:1;white-space:pre;font-weight:normal;color:#fff;transform-origin:0 0;transform:scaleX(0.9355);-webkit-text-stroke-width:0.35px;">This places each iteration on x</span>
<span id="t10" style="position:absolute;left:61.50px;top:561.20px;font-size:17.80px;line-height:1;white-space:pre;font-weight:normal;color:#fff;transform-origin:0 0;transform:scaleX(0.9313);-webkit-text-stroke-width:0.35px;">This node is&nbsp; is strictly related</span>
<span id="t11" style="position:absolute;left:61.00px;top:583.20px;font-size:17.80px;line-height:1;white-space:pre;font-weight:normal;color:#fff;transform-origin:0 0;transform:scaleX(0.9612);-webkit-text-stroke-width:0.35px;">to the container and&nbsp; provides</span>
<span id="t12" style="position:absolute;left:61.00px;top:604.90px;font-size:17.80px;line-height:1;white-space:pre;font-weight:normal;color:#fff;transform-origin:0 0;transform:scaleX(0.9649);-webkit-text-stroke-width:0.35px;">the index of each iteration</span>
<span id="t13" style="position:absolute;left:406.80px;top:641.50px;font-size:17.80px;line-height:1;white-space:pre;font-weight:normal;color:#fff;transform-origin:0 0;transform:scaleX(0.9262);-webkit-text-stroke-width:0.35px;">This node assigns each element</span>
<span id="t14" style="position:absolute;left:405.60px;top:663.20px;font-size:17.80px;line-height:1;white-space:pre;font-weight:normal;color:#fff;transform-origin:0 0;transform:scaleX(0.9632);-webkit-text-stroke-width:0.35px;">of the string array according to the index</span>
<span id="t15" style="position:absolute;left:338.20px;top:899.30px;font-size:17.80px;line-height:1;white-space:pre;font-weight:normal;color:#fff;transform-origin:0 0;transform:scaleX(0.9551);-webkit-text-stroke-width:0.35px;">This condition allows</span>
<span id="t16" style="position:absolute;left:337.80px;top:921.50px;font-size:17.80px;line-height:1;white-space:pre;font-weight:normal;color:#fff;transform-origin:0 0;transform:scaleX(0.9584);-webkit-text-stroke-width:0.35px;">to change color when it’s true.</span>
<svg style="position:absolute;left:0;top:0" width="1688" height="1080" viewBox="0 0 1688 1080" fill="none"><path d="M668 323 C 684 302, 700 280, 700 251 C 700 215, 668 175, 602 155.6 C 560 142, 520 132, 480 131.8 C 455 131.8, 430 136, 408 141.5" stroke="#3fa95a" stroke-width="1.2"/><path d="M401.6 143.4 L412.6 136.6 L411 141.4 L414.2 146.2 Z" fill="#39b54a"/><line x1="397.7" y1="158.6" x2="418.5" y2="158.6" stroke="#c846e6" stroke-width="1.8"/><path d="M422.5 158.6 L413.0 154.4 L416.0 158.6 L413.0 162.8 Z" fill="#c846e6"/><line x1="371.8" y1="611.4" x2="392.7" y2="611.4" stroke="#c846e6" stroke-width="1.8"/><path d="M396.7 611.4 L387.2 607.2 L390.2 611.4 L387.2 615.6 Z" fill="#c846e6"/></svg>
</div>
</body></html>
